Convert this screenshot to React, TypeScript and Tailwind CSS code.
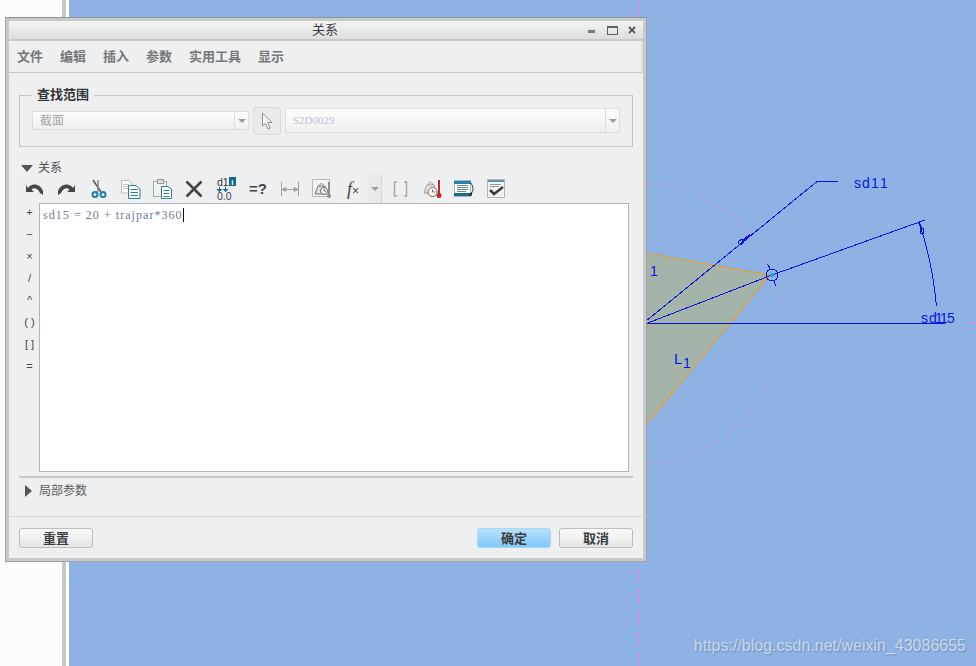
const CJK = "font-['Liberation_Sans','Noto_Sans_CJK_SC',sans-serif]";

// ── Sketch canvas behind the dialog ──────────────────────────────────────────

function SketchCanvas() {
  return (
    <svg width="907" height="666" viewBox="69 0 907 666" className="block">
      <polygon points="600,246 770,275 600,480" fill="#a5b4a8" />
      <g shapeRendering="crispEdges" fill="none">
        <path d="M640,252 L770,275" stroke="#f39a10" strokeDasharray="7 1" />
        <path d="M770,275 L640,432" stroke="#f39a10" />
        <circle cx="640" cy="323" r="141" stroke="#f27fd2" strokeDasharray="1 3" />
        <line x1="639.500" y1="0" x2="639.500" y2="666" stroke="#35d5e5" />
        <line x1="639.500" y1="0" x2="639.500" y2="666" stroke="#f27fd2" strokeDasharray="18 3" />
        <line x1="968" y1="323.500" x2="976" y2="323.500" stroke="#f27fd2" />
      </g>
      <g stroke="#0a14e0" fill="none" strokeWidth="1" shapeRendering="crispEdges">
        <polyline points="640,326 817,181.500 838,181.500" />
        <polyline points="640,326 772,275 925,220" />
        <line x1="640" y1="323.500" x2="945" y2="323.500" />
        <path d="M919,222 Q932,260 936.500,306" />
        <circle cx="772" cy="275" r="6" />
        <path d="M767,264 Q771,268 769,270 M774,281 Q775,284 776,286" />
        <ellipse cx="741" cy="242" rx="2" ry="3" transform="rotate(50 741 242)" />
        <line x1="742" y1="241" x2="750" y2="235" strokeWidth="2" />
        <ellipse cx="922" cy="231" rx="2" ry="3" />
        <line x1="919" y1="223" x2="922" y2="229" strokeWidth="2" />
      </g>
      <circle cx="772" cy="275" r="2" fill="#1b9fd8" />
      <g fill="#0a14e0" fontFamily="Liberation Sans, sans-serif" fontSize="14">
        <text x="854 862 871 880" y="188">sd11</text>
        <text x="921 929 935 940 947" y="323">sd115</text>
        <text x="650" y="276">1</text>
        <text x="674" y="364" fontSize="15">L</text>
        <text x="683" y="368">1</text>
      </g>
    </svg>
  );
}

// ── Toolbar icons ────────────────────────────────────────────────────────────

function Undo({ flip }: { flip?: boolean }) {
  return (
    <svg width="20" height="14" viewBox="0 0 20 14" className={flip ? "-scale-x-100" : ""}>
      <path d="M3 6 C6 1 15 1 18 9 L18 13 L15 11 C13 6 9 5 6.500 7.500 L9 10 L1 10 L1 3 Z" fill="#454648" />
    </svg>
  );
}

function Scissors() {
  return (
    <svg width="16" height="20" viewBox="0 0 16 20" fill="none">
      <path d="M2 1 L10 13" stroke="#555" strokeWidth="1.500" />
      <path d="M8 1 L6 13" stroke="#888" strokeWidth="1.500" transform="rotate(-8 7 7)" />
      <circle cx="4" cy="15.500" r="2.500" stroke="#1b7fa8" strokeWidth="2" />
      <circle cx="12" cy="15.500" r="2.500" stroke="#1b7fa8" strokeWidth="2" />
    </svg>
  );
}

function Copy() {
  return (
    <svg width="21" height="20" viewBox="0 0 21 20" fill="none">
      <path d="M1.500 1.500 H9 L12 4 V14 H1.500 Z" fill="#fbfbfb" stroke="#b9b9b9" />
      <path d="M3 5.500 H9 M3 7.500 H9 M3 9.500 H9" stroke="#c5c5c5" />
      <path d="M8.500 6.500 H16 L20 10 V19.500 H8.500 Z" fill="#fff" stroke="#2d7ea3" />
      <path d="M10.500 10.500 H18 M10.500 13.500 H18 M10.500 16.500 H18" stroke="#2d7ea3" />
    </svg>
  );
}

function Paste() {
  return (
    <svg width="21" height="21" viewBox="0 0 21 21" fill="none">
      <rect x="1.500" y="3.500" width="13" height="15" fill="#f1f1ee" stroke="#a9a9a9" />
      <rect x="5.500" y="1.500" width="6" height="4" fill="#dedede" stroke="#999" />
      <path d="M9.500 8.500 H16 L19.500 11 V20.500 H9.500 Z" fill="#fff" stroke="#2d7ea3" />
      <path d="M11.500 12.500 H17.500 M11.500 15.500 H17.500 M11.500 18.500 H17.500" stroke="#2d7ea3" />
    </svg>
  );
}

function Cross() {
  return (
    <svg width="18" height="18" viewBox="0 0 18 18">
      <path d="M1.500 1.500 L16.500 16.500 M16.500 1.500 L1.500 16.500" stroke="#444" strokeWidth="2.600" />
    </svg>
  );
}

function Dims() {
  return (
    <svg width="21" height="23" viewBox="0 0 21 23">
      <text x="1" y="8.500" fontSize="10.500" fill="#333" fontFamily="Liberation Sans, sans-serif">d1</text>
      <rect x="13" y="0" width="7" height="9" fill="#166a88" />
      <text x="15.200" y="8" fontSize="8" fontWeight="700" fill="#fff" fontFamily="Liberation Sans, sans-serif">i</text>
      <path d="M3.500 10 V14.500 M9.500 10 V14.500" stroke="#17658a" fill="none" />
      <path d="M0.500 12 H6.500 L3.500 15 Z M6.500 12 H12.500 L9.500 15 Z" fill="#17658a" />
      <text x="1" y="22.500" fontSize="10.500" fill="#444" fontFamily="Liberation Sans, sans-serif">0.0</text>
    </svg>
  );
}

function Span() {
  return (
    <svg width="18" height="14" viewBox="0 0 18 14" fill="none" stroke="#a0a3a6">
      <path d="M0.500 0 V14 M17.500 0 V14 M1 7.500 H17" />
      <path d="M1 7.500 L5 5.500 V9.500 Z M17 7.500 L13 5.500 V9.500 Z" fill="#a0a3a6" />
    </svg>
  );
}

function Mass() {
  return (
    <svg width="20" height="20" viewBox="0 0 20 20" fill="none">
      <rect x="0.500" y="0.500" width="17" height="17" fill="#f4f4f4" stroke="#bbb" />
      <path d="M3 15 L6 7 H13 L15 15 Z" fill="#ddd" stroke="#777" />
      <path d="M7 7 Q9.500 2 12 7" stroke="#888" />
      <circle cx="12" cy="12" r="3.500" fill="#fff" stroke="#666" />
      <path d="M12 10 V12 H14" stroke="#666" />
      <path d="M17 3 V16" stroke="#8b8d8f" strokeWidth="2" />
      <circle cx="17" cy="17" r="2" fill="#8b8d8f" />
    </svg>
  );
}

function Brackets() {
  return (
    <svg width="15" height="16" viewBox="0 0 15 16" fill="none" stroke="#a6a8aa" strokeWidth="1.500">
      <path d="M4 1 H1.500 V15 H4 M11 1 H13.500 V15 H11" />
    </svg>
  );
}

function ThermoBag() {
  return (
    <svg width="19" height="20" viewBox="0 0 19 20" fill="none">
      <path d="M1 14 L4 6 H11 L13 14 Z" fill="#e9e9e9" stroke="#999" />
      <path d="M5 6 Q7.500 0 10 6" stroke="#999" />
      <circle cx="9.500" cy="13" r="4.500" fill="#fff" stroke="#8a5a48" />
      <path d="M9.500 10.500 V13 H12" stroke="#666" />
      <path d="M16 1 V15" stroke="#b3302a" strokeWidth="2" />
      <circle cx="16" cy="16.500" r="2.500" fill="#b3302a" />
    </svg>
  );
}

function TableRefresh() {
  return (
    <svg width="21" height="20" viewBox="0 0 21 20" fill="none">
      <rect x="0.500" y="1.500" width="16" height="16" fill="#fff" stroke="#9fb4c0" />
      <rect x="0" y="2" width="17" height="3" fill="#2a80a8" />
      <rect x="0" y="14" width="17" height="3" fill="#176a8c" />
      <path d="M3 6.500 H14 M3 8.500 H14 M3 10.500 H14 M3 12.500 H12" stroke="#6d8a9a" />
      <path d="M17 4 Q21 10 17 15" stroke="#444" />
      <path d="M14 15 L18 13 V17 Z" fill="#333" />
    </svg>
  );
}

function CheckSheet() {
  return (
    <svg width="18" height="19" viewBox="0 0 18 19" fill="none">
      <rect x="0.500" y="0.500" width="17" height="18" fill="#f2f2f2" stroke="#b5b5b5" />
      <rect x="1" y="1" width="16" height="2" fill="#5b93ad" />
      <path d="M3 5.500 H14 M3 7.500 H12" stroke="#999" />
      <path d="M3 11 L7 15 L16 8" stroke="#3a3a3a" strokeWidth="2.500" />
    </svg>
  );
}

// ── Small controls ───────────────────────────────────────────────────────────

function Caret() {
  return <span className="block w-0 h-0 border-x-[4px] border-x-transparent border-t-[4px] border-t-[#9b9da0]" />;
}

function DialogButton({ label, primary }: { label: string; primary?: boolean }) {
  return (
    <button
      className={`w-[74px] h-[20px] rounded-[3px] border text-[13px] leading-none font-bold text-[#3c3d3f] ${
        primary
          ? "border-[#a9d8f5] bg-gradient-to-b from-[#b7e0fb] to-[#80c9f9]"
          : "border-[#bcbec0] bg-gradient-to-b from-[#fafafa] to-[#e4e5e6]"
      }`}
    >
      {label}
    </button>
  );
}

const menus = ["文件", "编辑", "插入", "参数", "实用工具", "显示"];
const operators = ["+", "−", "×", "/", "^", "( )", "[ ]", "="];

// ── Relations dialog ─────────────────────────────────────────────────────────

function RelationsDialog() {
  return (
    <div className={`absolute left-[5px] top-[17px] w-[642px] h-[545px] border border-[#a0a2a4] border-t-[#8f9194] bg-[#c8c9cb] p-[3px] flex flex-col ${CJK}`}>
      {/* title bar */}
      <div className="h-[18px] shrink-0 relative flex items-center justify-center pr-[2px] bg-gradient-to-b from-[#f2f3f3] to-[#dcdedf] text-[13px] text-[#3d3e40]">
        关系
        <div className="absolute right-[7px] top-0 h-full flex items-center">
          <span className="w-[7px] h-[3px] mt-[2px] bg-[#77797b]" />
          <span className="ml-[12px] w-[11px] h-[9px] border border-[#5d5f61] border-t-[2px]" />
          <svg className="ml-[10px]" width="8" height="8" viewBox="0 0 8 8"><path d="M1 1 L7 7 M7 1 L1 7" stroke="#5d5f61" strokeWidth="2" /></svg>
        </div>
      </div>

      <div className="flex-1 min-h-0 mt-[2px] bg-[#eeeff1] flex flex-col">
        {/* menu bar */}
        <div className="h-[32px] shrink-0 flex items-center gap-[17px] pl-[8px] border-b border-[#c5c7c9] border-r-[2px] border-r-[#dfe0e2] text-[13px] font-bold text-[#75777a]">
          {menus.map((m) => (
            <span key={m}>{m}</span>
          ))}
        </div>

        {/* search scope group */}
        <fieldset className="mx-[10px] mt-[15px] h-[59px] shrink-0 border border-[#c5c7c9] px-[12px] flex items-start">
          <legend className="px-[5px] text-[13px] leading-[14px] font-bold text-[#333436]">查找范围</legend>
          <div className="mt-[9px] w-[217px] h-[19px] flex items-center border border-[#dcdee0] bg-gradient-to-b from-[#fdfdfd] to-[#eeeff0] text-[12px] text-[#a4a6a8]">
            <span className="flex-1 pl-[7px]">截面</span>
            <span className="w-[14px] h-full flex items-center justify-center border-l border-[#dcdee0]"><Caret /></span>
          </div>
          <div className="ml-[4px] mt-[5px] w-[28px] h-[28px] rounded-[3px] border border-[#d8dadc] bg-[#e9eaec] flex items-center justify-center">
            <svg width="12" height="19" viewBox="0 0 12 19" fill="none"><path d="M1.500 1 V14 L4.500 11.500 L7 17 L9 16 L6.800 10.500 H11 Z" fill="#f4f4f4" stroke="#8f9193" /></svg>
          </div>
          <div className="ml-[4px] mt-[6px] flex-1 h-[25px] flex items-center border border-[#dcdee0] bg-gradient-to-b from-[#fdfdfd] to-[#eeeff0] font-['Liberation_Serif',serif] text-[11px] text-[#bcc5d0]">
            <span className="flex-1 pl-[7px]">S2D0029</span>
            <span className="w-[14px] h-full flex items-center justify-center border-l border-[#dcdee0]"><Caret /></span>
          </div>
        </fieldset>

        {/* relations header */}
        <div className="mt-[13px] ml-[12px] h-[16px] shrink-0 flex items-center gap-[5px] text-[12px] text-[#4c4d4f]">
          <span className="block w-0 h-0 border-x-[6px] border-x-transparent border-t-[7px] border-t-[#555658]" />
          关系
        </div>

        {/* toolbar */}
        <div className="ml-[16px] mt-[1px] h-[23px] shrink-0 flex items-center">
          <span className="w-[31px] flex"><Undo /></span>
          <span className="w-[35px] flex"><Undo flip /></span>
          <span className="w-[29px] flex"><Scissors /></span>
          <span className="w-[32px] flex"><Copy /></span>
          <span className="w-[33px] flex"><Paste /></span>
          <span className="w-[31px] flex"><Cross /></span>
          <span className="w-[33px] flex"><Dims /></span>
          <span className="w-[32px] flex font-bold text-[15px] leading-none text-[#444] font-['Liberation_Sans',sans-serif]">=?</span>
          <span className="w-[31px] flex"><Span /></span>
          <span className="w-[35px] flex"><Mass /></span>
          <span className="w-[21px] flex items-baseline font-['Liberation_Serif',serif] italic text-[18px] leading-none text-[#444]">
            f<span className="not-italic text-[12px] font-['Liberation_Sans',sans-serif]">×</span>
          </span>
          <span className="w-[14px] h-[28px] mr-[11px] flex items-center justify-center bg-[#e8e9eb] border-r border-[#d6d8da]"><Caret /></span>
          <span className="w-[30px] flex"><Brackets /></span>
          <span className="w-[31px] flex"><ThermoBag /></span>
          <span className="w-[33px] flex"><TableRefresh /></span>
          <span className="w-[20px] flex"><CheckSheet /></span>
        </div>

        {/* editor */}
        <div className="ml-[10px] mr-[14px] mt-[3px] h-[269px] shrink-0 flex">
          <div className="w-[20px] shrink-0 pl-[1px] -mt-[2px] flex flex-col items-center text-[#444] font-['Liberation_Sans',sans-serif] text-[11px]">
            {operators.map((op) => (
              <span key={op} className="h-[22px] w-full flex items-center justify-center leading-none">{op}</span>
            ))}
          </div>
          <div className="flex-1 border border-[#b3b5b7] bg-white pl-[3px] pt-[3px] font-['Liberation_Serif',serif] text-[12px] leading-[17px] text-[#6a7c9c]">
            <span className="tracking-[1.05px] border-r border-[#111]">sd15 = 20 + trajpar*360</span>
          </div>
        </div>

        {/* local params */}
        <div className="mx-[10px] mt-[4px] shrink-0 border-t-2 border-[#c5c7c9] h-[40px] flex items-center gap-[7px] pl-[6px] pb-[12px] text-[12px] text-[#5a5b5d]">
          <span className="block w-0 h-0 border-y-[6px] border-y-transparent border-l-[7px] border-l-[#555658]" />
          局部参数
        </div>

        {/* footer */}
        <div className="flex-1 border-t border-[#dcdee0] flex items-center justify-between px-[10px] pt-[1px]">
          <DialogButton label="重置" />
          <div className="flex gap-[8px]">
            <DialogButton label="确定" primary />
            <DialogButton label="取消" />
          </div>
        </div>
      </div>
    </div>
  );
}

export default function App() {
  return (
    <div className="relative w-[976px] h-[666px] overflow-hidden flex bg-[#8db2e3]">
      <div className="w-[62px] bg-[#fcfcfc]" />
      <div className="w-[4px] bg-[#c5c8cb]" />
      <div className="w-[3px] bg-white" />
      <div className="flex-1 relative">
        <SketchCanvas />
        <span className="absolute right-[10px] bottom-[12px] font-['Liberation_Sans',sans-serif] text-[16px] leading-none text-[#c9d8ec] [text-shadow:1px_1px_1px_rgba(90,120,160,0.6)]">
          https://blog.csdn.net/weixin_43086655
        </span>
      </div>
      <RelationsDialog />
    </div>
  );
}
